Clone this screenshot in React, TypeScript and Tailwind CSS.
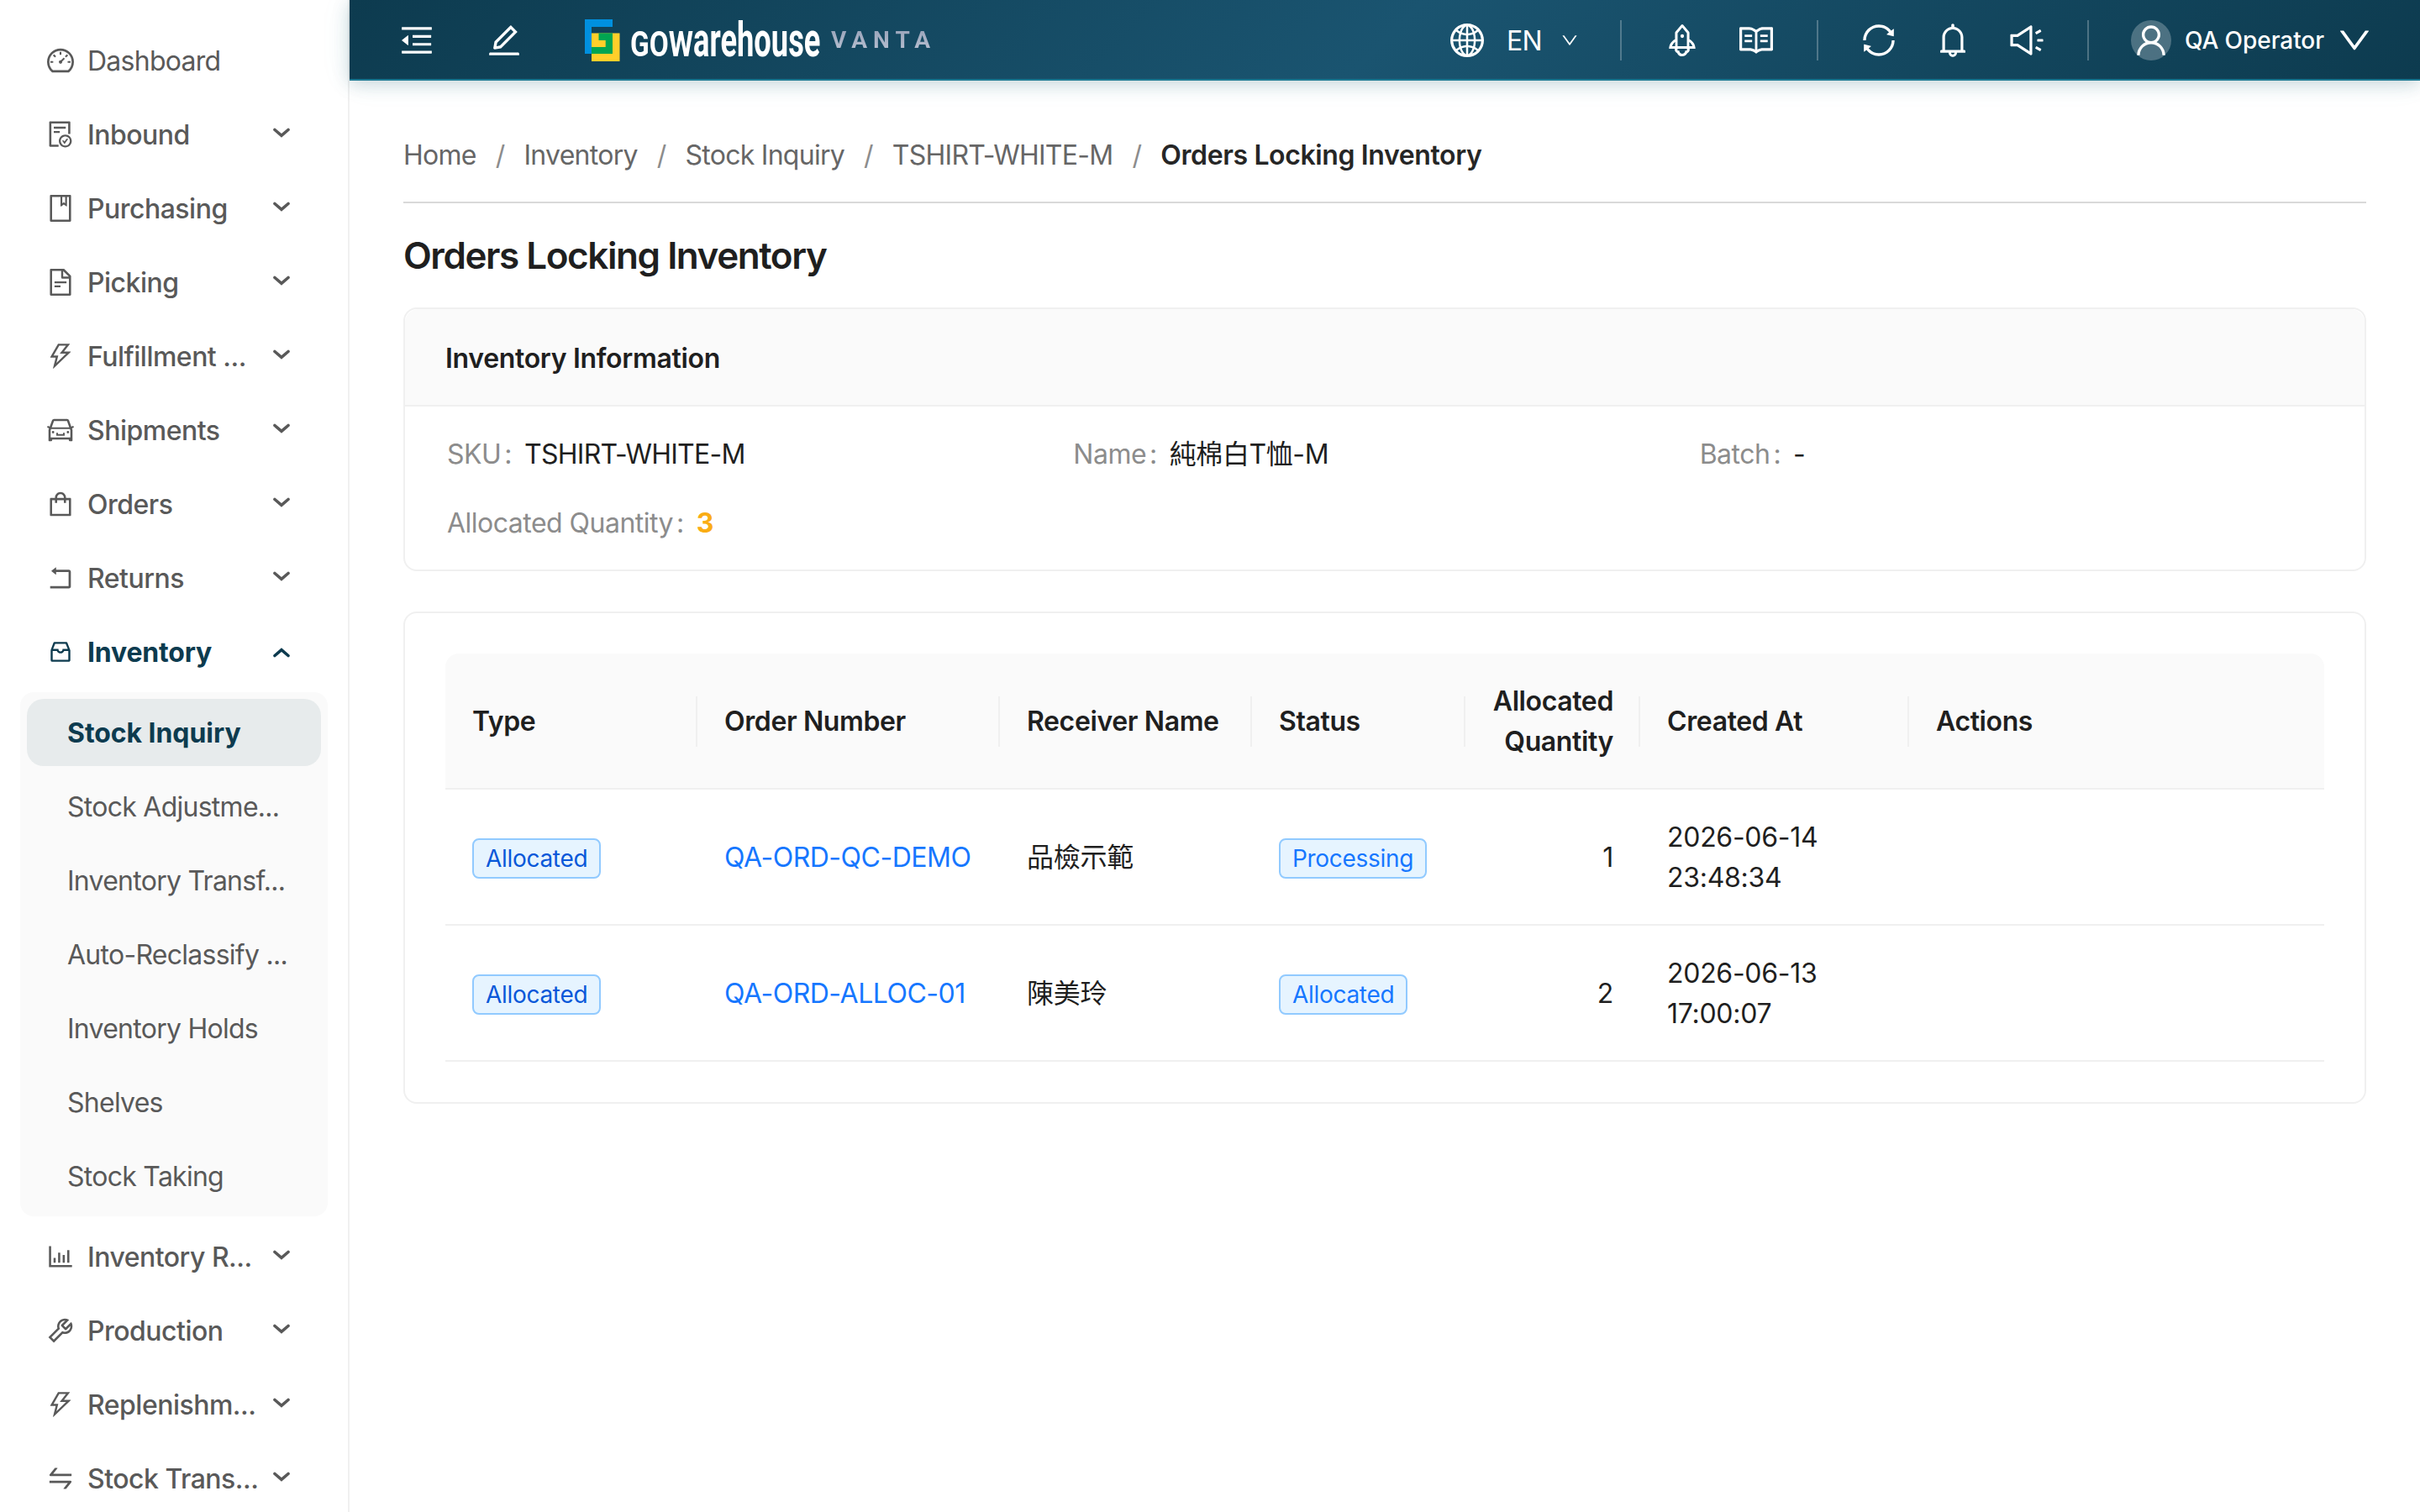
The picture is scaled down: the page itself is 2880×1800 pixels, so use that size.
import { useState, type ReactNode } from "react";
import type { IconType } from "react-icons";
import {
  AiOutlineBarChart,
  AiOutlineBell,
  AiOutlineBook,
  AiOutlineCar,
  AiOutlineDashboard,
  AiOutlineDown,
  AiOutlineEdit,
  AiOutlineFileDone,
  AiOutlineFileText,
  AiOutlineGlobal,
  AiOutlineInbox,
  AiOutlineMenuFold,
  AiOutlineRead,
  AiOutlineRocket,
  AiOutlineRollback,
  AiOutlineShopping,
  AiOutlineSound,
  AiOutlineSwap,
  AiOutlineSync,
  AiOutlineThunderbolt,
  AiOutlineTool,
  AiOutlineUser,
} from "react-icons/ai";
import { clsx } from "clsx";

const TIGHT = "64 64 896 896";
const FULL = "0 0 1024 1024";

type MenuEntry = {
  label: string;
  icon: IconType;
  viewBox?: string;
  leaf?: boolean;
  children?: string[];
};

const MENU: MenuEntry[] = [
  { label: "Dashboard", icon: AiOutlineDashboard, leaf: true },
  { label: "Inbound", icon: AiOutlineFileDone },
  { label: "Purchasing", icon: AiOutlineBook },
  { label: "Picking", icon: AiOutlineFileText },
  { label: "Fulfillment ...", icon: AiOutlineThunderbolt },
  { label: "Shipments", icon: AiOutlineCar },
  { label: "Orders", icon: AiOutlineShopping },
  { label: "Returns", icon: AiOutlineRollback },
  {
    label: "Inventory",
    icon: AiOutlineInbox,
    viewBox: FULL,
    children: [
      "Stock Inquiry",
      "Stock Adjustme...",
      "Inventory Transf...",
      "Auto-Reclassify ...",
      "Inventory Holds",
      "Shelves",
      "Stock Taking",
    ],
  },
  { label: "Inventory R...", icon: AiOutlineBarChart },
  { label: "Production", icon: AiOutlineTool },
  { label: "Replenishm...", icon: AiOutlineThunderbolt },
  { label: "Stock Trans...", icon: AiOutlineSwap },
];

const CRUMBS = ["Home", "Inventory", "Stock Inquiry", "TSHIRT-WHITE-M"];

const ORDERS = [
  {
    type: "Allocated",
    number: "QA-ORD-QC-DEMO",
    receiver: "品檢示範",
    status: "Processing",
    quantity: 1,
    date: "2026-06-14",
    time: "23:48:34",
  },
  {
    type: "Allocated",
    number: "QA-ORD-ALLOC-01",
    receiver: "陳美玲",
    status: "Allocated",
    quantity: 2,
    date: "2026-06-13",
    time: "17:00:07",
  },
];

function MenuArrow({ open }: { open: boolean }) {
  return (
    <svg
      viewBox="0 0 20 12"
      className={clsx("h-3 w-5", open ? "mt-0.5 rotate-180" : "-mt-1")}
      fill="none"
      stroke="currentColor"
      strokeWidth="3.6"
      strokeLinecap="round"
    >
      <path d="M2 2.5 10 9.3 18 2.5" />
    </svg>
  );
}

function Sidebar() {
  const [selected, setSelected] = useState("Stock Inquiry");

  return (
    <aside className="w-[416px] shrink-0 border-r-2 border-[#f0f0f0] bg-white">
      <nav className="flex flex-col gap-2 px-6 pt-8 text-[#595959]">
        {MENU.map(({ label, icon: Icon, viewBox = TIGHT, leaf, children }) => (
          <div key={label} className="flex flex-col gap-2">
            <div
              className={clsx(
                "flex h-20 items-center pr-[45px] pl-8",
                children && "font-bold tracking-[-0.006em] text-[#0d3b4f]",
                !children && !leaf && "font-medium tracking-[-0.016em]",
              )}
            >
              <Icon size={32} viewBox={viewBox} className="shrink-0" />
              <span className="ml-4 flex-1 pt-0.5 whitespace-nowrap">{label}</span>
              {!leaf && <MenuArrow open={Boolean(children)} />}
            </div>
            {children && (
              <ul className="flex flex-col gap-2 rounded-2xl bg-[#fafafa] p-2">
                {children.map((child) => (
                  <li
                    key={child}
                    onClick={() => setSelected(child)}
                    className={clsx(
                      "flex h-20 items-center rounded-[20px] pt-0.5 pl-12 whitespace-nowrap",
                      child === selected &&
                        "bg-[#e7ebec] font-bold tracking-[-0.002em] text-[#0d3b4f]",
                    )}
                  >
                    {child}
                  </li>
                ))}
              </ul>
            )}
          </div>
        ))}
      </nav>
    </aside>
  );
}

function Logo() {
  return (
    <div className="flex items-center">
      <svg viewBox="0 0 42 50" className="h-[50px] w-[42px]">
        <path d="M0 0h33v9H8v32H0z" fill="#0090df" />
        <path d="M8 16.500h33.500V50H8z" fill="#ffcf2a" />
        <path d="M16.500 16.500H33V41H8v-8h16.700v-8h-8.200z" fill="#00a551" />
      </svg>
      {/* Capitals are sized down to the x-height of the rest of the word */}
      <div className="ml-3 flex w-[228px] items-baseline pt-[7px] font-['Roboto',sans-serif] leading-[80px] font-bold tracking-normal">
        <span className="w-[75px] shrink-0">
          <span className="inline-block origin-left scale-x-[0.775] text-[43px]">GOW</span>
        </span>
        <span className="w-[153px] shrink-0">
          <span className="inline-block origin-left scale-x-[0.637] text-[57px]">arehouse</span>
        </span>
      </div>
      <span className="ml-[11px] bg-linear-to-b from-[#8c98b0] to-[#c6cddb] bg-clip-text font-['Roboto',sans-serif] text-[28px] font-bold tracking-[7px] text-transparent">
        VANTA
      </span>
    </div>
  );
}

function Divider() {
  return <div className="h-12 w-0.5 bg-white/25" />;
}

function Header() {
  return (
    <header className="relative z-10 flex h-24 items-center border-b-2 border-[#1b7791] bg-[linear-gradient(135deg,#0d3b4f_0%,#1a5470_50%,#0d3b4f_100%)] pt-0.5 pr-[58px] pl-[60px] text-white shadow-[0_4px_20px_rgba(13,59,79,0.2),0_0_40px_rgba(0,180,200,0.07)]">
      <AiOutlineMenuFold size={40} viewBox={TIGHT} />
      <AiOutlineEdit size={40} viewBox={TIGHT} className="ml-16" />
      <div className="ml-[76px]">
        <Logo />
      </div>

      <div className="ml-auto flex items-center">
        <AiOutlineGlobal size={40} viewBox={TIGHT} />
        <span className="ml-[27px] pt-0.5">EN</span>
        <AiOutlineDown size={20} viewBox={TIGHT} className="ml-[23px]" />
        <div className="ml-[50px]">
          <Divider />
        </div>
        <div className="ml-[52px] flex gap-12">
          <AiOutlineRocket size={40} viewBox={TIGHT} />
          <AiOutlineRead size={40} viewBox={TIGHT} />
        </div>
        <div className="ml-[52px]">
          <Divider />
        </div>
        <div className="ml-[52px] flex gap-12">
          <AiOutlineSync size={40} viewBox={TIGHT} />
          <AiOutlineBell size={40} viewBox={TIGHT} />
          <AiOutlineSound size={40} viewBox={TIGHT} />
        </div>
        <div className="ml-[52px]">
          <Divider />
        </div>
        <div className="ml-[50px] flex size-12 items-center justify-center rounded-full bg-white/25">
          <AiOutlineUser size={40} viewBox={TIGHT} />
        </div>
        <span className="ml-4 text-[28px] font-medium tracking-[-0.002em]">QA Operator</span>
        <AiOutlineDown size={40} viewBox={TIGHT} className="ml-4" />
      </div>
    </header>
  );
}

function Field({ label, children }: { label: string; children: ReactNode }) {
  return (
    <div className="flex h-[50px] items-center">
      <span className="mr-[15px] tracking-[-0.016em] text-[#8c8c8c]">
        {label}
        <span className="ml-1">:</span>
      </span>
      {children}
    </div>
  );
}

function Tag({ children, strong }: { children: ReactNode; strong?: boolean }) {
  return (
    <span
      className={clsx(
        "inline-flex h-12 items-center rounded-lg border-2 border-[#91caff] bg-[#e6f4ff] px-3.5 align-middle text-[28px] tracking-[-0.011em]",
        strong ? "text-[#0958d9]" : "text-[#1677ff]",
      )}
    >
      {children}
    </span>
  );
}

function HeadCell({ children, right, last }: { children: ReactNode; right?: boolean; last?: boolean }) {
  return (
    <div className="flex items-center">
      <div className={clsx("flex-1 px-8", right && "text-right")}>{children}</div>
      {!last && <div className="-ml-0.5 h-[60px] w-0.5 bg-[#f0f0f0]" />}
    </div>
  );
}

function OrdersTable() {
  const columns = "grid grid-cols-[300px_360px_300px_254px_208px_320px_1fr]";

  return (
    <div className="tracking-[-0.009em]">
      <div
        className={clsx(
          columns,
          "h-[162px] rounded-t-2xl border-b-2 border-[#f0f0f0] bg-[#fafafa] pt-0.5 font-semibold tracking-[-0.012em]",
        )}
      >
        <HeadCell>Type</HeadCell>
        <HeadCell>Order Number</HeadCell>
        <HeadCell>Receiver Name</HeadCell>
        <HeadCell>Status</HeadCell>
        <HeadCell right>Allocated Quantity</HeadCell>
        <HeadCell>Created At</HeadCell>
        <HeadCell last>Actions</HeadCell>
      </div>
      {ORDERS.map((order) => (
        <div
          key={order.number}
          className={clsx(columns, "h-[162px] items-center border-b-2 border-[#f0f0f0] pt-0.5")}
        >
          <div className="px-8">
            <Tag strong>{order.type}</Tag>
          </div>
          <div className="px-8 tracking-[-0.015em] whitespace-nowrap text-[#1677ff]">
            {order.number}
          </div>
          <div className="px-8">{order.receiver}</div>
          <div className="px-8">
            <Tag>{order.status}</Tag>
          </div>
          <div className="px-8 text-right">{order.quantity}</div>
          <div className="px-8">
            <div>{order.date}</div>
            <div>{order.time}</div>
          </div>
          <div />
        </div>
      ))}
    </div>
  );
}

export default function App() {
  return (
    <div className="flex h-[1800px] w-[2880px] overflow-hidden bg-white font-['Inter','Noto_Sans_CJK_TC',sans-serif] text-[32px] leading-[48px] tracking-[-0.023em] text-[#1f1f1f]">
      <Sidebar />
      <div className="flex flex-1 flex-col">
        <Header />
        <main className="px-16 pt-[65px]">
          <div className="flex h-[81px] border-b-2 border-[#d9d9d9] text-[#666]">
            {CRUMBS.map((crumb) => (
              <div key={crumb} className="flex">
                <span>{crumb}</span>
                <span className="mx-[23px] text-[#8c8c8c]">/</span>
              </div>
            ))}
            <span className="font-semibold tracking-[-0.012em] text-[#262626]">
              Orders Locking Inventory
            </span>
          </div>

          <h1 className="mt-8 text-[44px] leading-[60px] font-semibold tracking-[-0.033em]">
            Orders Locking Inventory
          </h1>

          <section className="mt-8 rounded-2xl border-2 border-[#f0f0f0]">
            <div className="flex h-[116px] items-center rounded-t-2xl border-b-2 border-[#f0f0f0] bg-[#fafafa] px-12 pt-[3px] font-semibold tracking-[-0.01em]">
              Inventory Information
            </div>
            <div className="grid grid-cols-3 gap-y-8 pt-8 pr-[46px] pb-[30px] pl-[50px]">
              <Field label="SKU">TSHIRT-WHITE-M</Field>
              <Field label="Name">
                <span className="tracking-[-0.013em]">純棉白T恤-M</span>
              </Field>
              <Field label="Batch">-</Field>
              <Field label="Allocated Quantity">
                <span className="font-bold text-[#faad14]">3</span>
              </Field>
            </div>
          </section>

          <section className="mt-12 rounded-2xl border-2 border-[#f0f0f0] p-12">
            <OrdersTable />
          </section>
        </main>
      </div>
    </div>
  );
}
